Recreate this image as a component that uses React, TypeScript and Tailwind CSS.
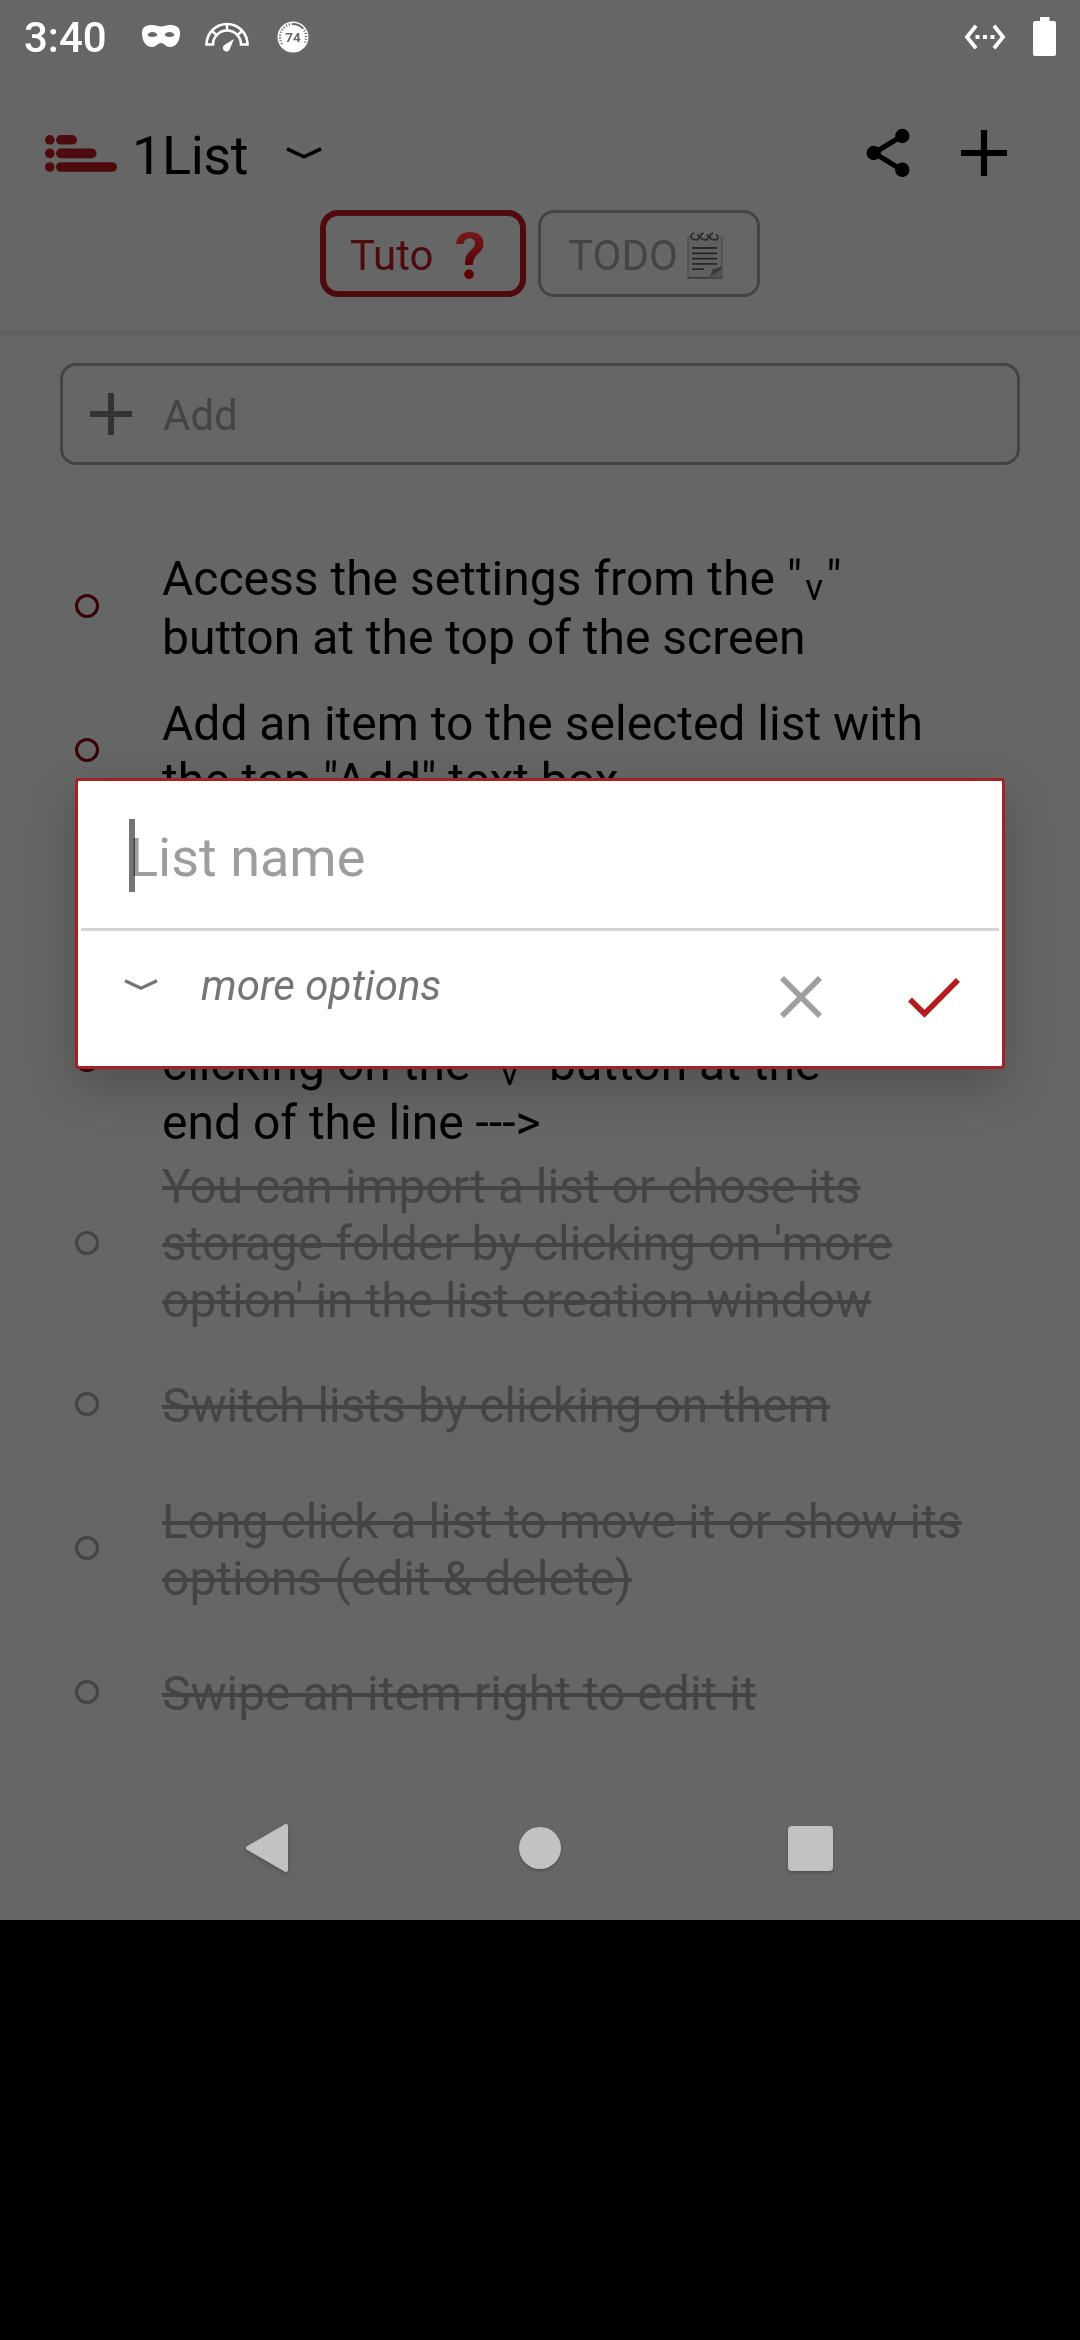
import React from "react";

const LowV = () => (
  <span className="relative top-[5px] inline-block w-[24px] text-center text-[37px] leading-none">v</span>
);

type Item = { lines: React.ReactNode[]; done?: boolean; row: string; text: string };

const items: Item[] = [
  {
    row: "h-[144px]",
    text: "leading-[59px] mt-1",
    lines: [<>Access the settings from the "<LowV />"</>, "button at the top of the screen"],
  },
  {
    row: "h-[144px]",
    text: "leading-[57px] mt-1",
    lines: ["Add an item to the selected list with", 'the top "Add" text box'],
  },
  { row: "h-[144px]", text: "leading-[57px]", lines: [] },
  {
    row: "h-[188px]",
    text: "leading-[59px] mt-[7px]",
    lines: ["\u00a0", <>clicking on the "<LowV />" button at the</>, "end of the line --->"],
  },
  {
    row: "h-[178px]",
    text: "leading-[57px] mt-[1px]",
    done: true,
    lines: [
      "You can import a list or chose its",
      "storage folder by clicking on 'more",
      "option' in the list creation window",
    ],
  },
  { row: "h-[144px]", text: "leading-[57px] mt-[3px]", done: true, lines: ["Switch lists by clicking on them"] },
  {
    row: "h-[144px]",
    text: "leading-[57px] mt-1",
    done: true,
    lines: ["Long click a list to move it or show its", "options (edit & delete)"],
  },
  { row: "h-[144px]", text: "leading-[57px] mt-[3px]", done: true, lines: ["Swipe an item right to edit it"] },
];

function StatusBar() {
  return (
    <div className="flex h-[72px] items-center text-white">
      <span className="mt-[3px] ml-[24px] w-[118px] text-[42px] leading-[50px] font-medium">3:40</span>
      <svg className="h-[24px] w-[38px]" viewBox="0 0 38 24">
        <path
          fillRule="evenodd"
          fill="#fff"
          d="M10 1c4 0 6 1.600 9 1.600S24 1 28 1c6 0 10 2 10 8 0 8-4 14-10 14-4.500 0-5.500-4-9-4s-4.500 4-9 4C4 23 0 17 0 9 0 3 4 1 10 1zM5.500 11c1.500 2.500 8 2.500 10 0-1.500-4-8.500-4-10 0zm17 0c2 2.500 8.500 2.500 10 0-1.500-4-8.500-4-10 0z"
        />
      </svg>
      <svg className="mt-px ml-[25px] h-[30px] w-[44px]" viewBox="0 0 44 30">
        <path d="M1.500 22.500a20.500 20.500 0 0 1 41 0h-6.500a14 14 0 0 0-28 0z" fill="none" stroke="#fff" strokeWidth="2.600" />
        <path d="M22 2v7M7 9l5.500 5M37 9l-5.500 5" stroke="#fff" strokeWidth="2.400" />
        <path d="M29 17l-4 9.500a3.600 3.600 0 1 1-6-3.200z" fill="#fff" />
      </svg>
      <svg className="mt-px ml-[28px] h-[32px] w-[32px]" viewBox="0 0 32 32">
        <circle cx="16" cy="16" r="15.500" fill="#fff" />
        <path d="M5 23a13 13 0 0 1 11-20" fill="none" stroke="#666" strokeWidth="2.400" strokeDasharray="1.100 1.800" />
        <path d="M16 3a13 13 0 0 1 9.500 4" fill="none" stroke="#666" strokeWidth="2" />
        <path d="M25.500 7a13 13 0 0 1 1.500 16" fill="none" stroke="#666" strokeWidth="2.400" strokeDasharray="1.100 1.800" />
        <text x="16" y="20.800" textAnchor="middle" fontSize="13.500" fontWeight="700" fill="#666">74</text>
      </svg>
      <svg className="mt-px ml-auto h-[26px] w-[42px]" viewBox="0 0 42 26">
        <path d="M12 1.800L3 13l9 11.200M30 1.800L39 13l-9 11.200" fill="none" stroke="#fff" strokeWidth="3.800" />
        <path d="M11.500 11h4v4h-4zM19 11h4v4h-4zM26.500 11h4v4h-4z" fill="#fff" />
      </svg>
      <svg className="mr-[24px] ml-[27px] h-[39px] w-[23px]" viewBox="0 0 23 39">
        <path d="M7 0h9.500v4H21a2 2 0 0 1 2 2v31a2 2 0 0 1-2 2H2a2 2 0 0 1-2-2V6a2 2 0 0 1 2-2h5z" fill="#fff" />
      </svg>
    </div>
  );
}

function Header() {
  return (
    <header className="h-[261px] border-b-2 border-[#5d5d5d] shadow-[0_2px_4px_rgba(0,0,0,0.06)]">
      <div className="flex h-[138px] items-start pt-[52px]">
        <svg className="mt-[11px] ml-[45px] h-[37px] w-[72px]" viewBox="0 0 72 37" fill="#4d0b0d">
          <circle cx="4.800" cy="4.800" r="4.800" />
          <circle cx="4.800" cy="18.400" r="4.800" />
          <circle cx="4.800" cy="32" r="4.800" />
          <rect x="11" y="0" width="21" height="9.600" rx="4.800" />
          <rect x="11" y="13.600" width="40.500" height="9.600" rx="4.800" />
          <rect x="11" y="27.200" width="61" height="9.600" rx="4.800" />
        </svg>
        <h1 className="mt-[2px] ml-[15px] w-[154px] text-[54px] leading-[60px] tracking-[-0.4px] text-black">1List</h1>
        <svg className="mt-[23px] h-[13px] w-[36px]" viewBox="0 0 36 13">
          <path d="M1 1.800l17 8 17-8" fill="none" stroke="#000" strokeWidth="3.600" />
        </svg>
        <svg className="mt-[4px] ml-auto h-[50px] w-[46px]" viewBox="0 0 46 50">
          <path d="M36 8L8 25l28 17" fill="none" stroke="#000" strokeWidth="5" />
          <circle cx="36.300" cy="8" r="7.200" />
          <circle cx="7.700" cy="25" r="7.200" />
          <circle cx="36.300" cy="41.800" r="7.200" />
        </svg>
        <svg className="mt-[6px] mr-[73px] ml-[49px] h-[46px] w-[46px]" viewBox="0 0 46 46">
          <path d="M23 0v46M0 23h46" stroke="#000" strokeWidth="6.200" />
        </svg>
      </div>
      <div className="flex gap-[12px] pl-[320px] text-[42px]">
        <div className="flex h-[87px] w-[206px] rounded-[18px] border-6 border-[#4d0b0d] text-[#4d0b0d]">
          <span className="ml-[24px] w-[106px] leading-[79px]">Tuto</span>
          <svg className="mt-[16px] h-[48px] w-[28px]" viewBox="0 0 28 48">
            <defs>
              <linearGradient id="q" x1="0" y1="0" x2="0" y2="1">
                <stop offset="0" stopColor="#76191c" />
                <stop offset="1" stopColor="#560406" />
              </linearGradient>
            </defs>
            <path
              d="M0 12C1 4 6 0 14 0c8 0 13.500 4 13.500 11 0 6-3 8.500-6 11.500-2.800 2.800-4.500 5-4.500 10.500H9c0-7 1-10 4.500-13.500 3-3 5.500-4.500 5.500-8.500 0-3.200-2-4.800-5.500-4.800-3.300 0-5.300 2-6 5.800z"
              fill="url(#q)"
            />
            <circle cx="13" cy="42.300" r="4.800" fill="#5c0000" />
          </svg>
        </div>
        <div className="flex h-[87px] w-[222px] rounded-[16px] border-3 border-[#444] text-[#444]">
          <span className="ml-[27px] w-[119px] leading-[85px]">TODO</span>
          <svg className="mt-[19px] h-[48px] w-[36px]" viewBox="0 0 36 48">
            <path d="M1 4h34v42H1z" fill="#606060" />
            <path d="M1 4v42h34V4" fill="none" stroke="#4a4a4a" strokeWidth="1.200" />
            <path d="M1 45.800h34" stroke="#383838" strokeWidth="1.600" />
            <path d="M5 16h25M5 21.300h25M5 26.600h25M5 31.900h25M5 37.200h12" stroke="#272727" strokeWidth="1.800" />
            <path d="M23 45.500l2.500-8 9-3v3z" fill="#3a3a3a" />
            <path d="M23 45.500L34.500 37v8.500z" fill="#525252" />
            <path
              d="M6.500 7.500a3 3 0 0 1 .8-6M10 2.500a2.800 2.800 0 1 1-3 4.500M16 7.500a3 3 0 0 1 .8-6M19.500 2.500a2.800 2.800 0 1 1-3 4.500M25.500 7.500a3 3 0 0 1 .8-6M29 2.500a2.800 2.800 0 1 1-3 4.500"
              fill="none"
              stroke="#2b2b2b"
              strokeWidth="1.700"
            />
          </svg>
        </div>
      </div>
    </header>
  );
}

function Dialog() {
  return (
    <div className="absolute top-[778px] left-[75px] h-[291px] w-[930px] rounded-[4px] border-3 border-[#a52125] bg-white shadow-[0_18px_48px_rgba(0,0,0,0.22)]">
      <div className="mx-[3px] flex h-[150px] items-start border-b-3 border-[#d1d5d9]">
        <span className="mt-[38px] ml-[48px] h-[73px] w-[6px] bg-[#757575]" />
        <span className="-ml-[6px] pt-[47px] text-[54px] leading-[60px] text-[#9d9d9d] mix-blend-multiply">List name</span>
      </div>
      <div className="flex items-start">
        <svg className="mt-[48px] ml-[46px] h-[12px] w-[34px]" viewBox="0 0 34 12">
          <path d="M1 1.700l16 7.500 16-7.500" fill="none" stroke="#757575" strokeWidth="3.400" />
        </svg>
        <span className="mt-[29px] ml-[43px] text-[42px] leading-[52px] text-[#757575] italic">more options</span>
        <svg className="mt-[45px] ml-auto h-[42px] w-[42px]" viewBox="0 0 42 42">
          <path d="M2 2l38 38M40 2L2 40" stroke="#9e9e9e" strokeWidth="5.600" />
        </svg>
        <svg className="mt-[47px] mr-[42px] ml-[86px] h-[40px] w-[52px]" viewBox="0 0 52 40">
          <path d="M2 21.500l14.500 14.300L50 2" fill="none" stroke="#b71c1c" strokeWidth="5.600" />
        </svg>
      </div>
    </div>
  );
}

export default function App() {
  return (
    <div className="relative h-[2340px] w-[1080px] overflow-hidden bg-black font-['Roboto',sans-serif]">
      <div className="flex h-[1920px] flex-col bg-[#666]">
        <StatusBar />
        <Header />
        <div className="mx-[60px] mt-[30px] flex h-[102px] shrink-0 items-start rounded-[16px] border-3 border-[#444]">
          <svg className="mt-[27px] ml-[27px] h-[42px] w-[42px]" viewBox="0 0 42 42">
            <path d="M21 0v42M0 21h42" stroke="#333" strokeWidth="6" />
          </svg>
          <span className="mt-[25px] ml-[31px] text-[42px] leading-[50px] text-[#444]">Add</span>
        </div>
        <ul className="mt-[69px] text-5xl whitespace-nowrap">
          {items.map((it, i) => (
            <li key={i} className={`flex items-center ${it.row}`}>
              <span
                className={`ml-[75px] h-[24px] w-[24px] shrink-0 rounded-full border-3 ${it.done ? "border-[#444]" : "border-[#380204]"}`}
              />
              <div className={`ml-[63px] ${it.text} ${it.done ? "text-[#444] line-through" : "text-black"}`}>
                {it.lines.map((l, j) => (
                  <div key={j}>{l}</div>
                ))}
              </div>
            </li>
          ))}
        </ul>
        <nav className="mt-auto flex h-[144px] items-center">
          <svg className="ml-[245px] h-[52px] w-[45px] drop-shadow-[0_2px_2px_rgba(0,0,0,0.2)]" viewBox="0 0 45 52">
            <path d="M3 26L41 4v44z" fill="#c2c2c2" stroke="#c2c2c2" strokeWidth="4" strokeLinejoin="round" />
          </svg>
          <span className="ml-[229px] h-[42px] w-[42px] rounded-full bg-[#c2c2c2] shadow-[0_2px_3px_rgba(0,0,0,0.2)]" />
          <span className="ml-[227px] h-[45px] w-[45px] rounded-[4px] bg-[#c2c2c2] shadow-[0_2px_3px_rgba(0,0,0,0.2)]" />
        </nav>
      </div>
      <Dialog />
    </div>
  );
}
